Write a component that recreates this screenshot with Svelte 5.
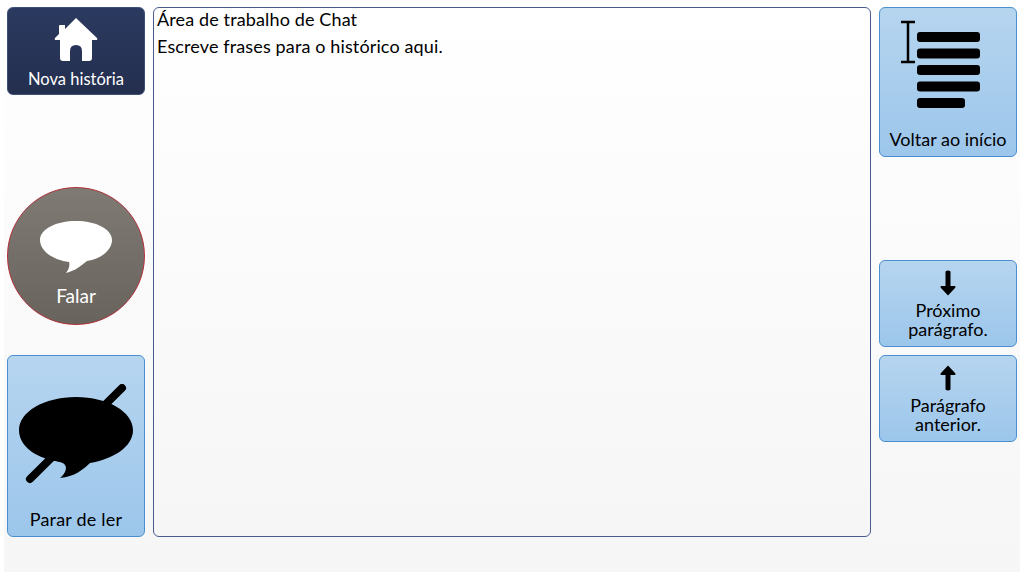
<script>
  const bars = [0, 1, 2, 3, 4];
</script>

<div class="page">
  <div class="col left">
    <button class="btn dark home">
      <svg class="ico" width="44" height="44" viewBox="0 0 44 44">
        <path fill="#fff" d="M22 0 L43 20 Q44 22 42 22 H38 V40 Q38 43 35 43 H28 V33 Q28 27 22 27 Q16 27 16 33 V43 H9 Q6 43 6 40 V22 H2 Q0 22 1 20 L5 16 V8 Q5 7 6 7 H11 V11 Z" />
      </svg>
      <span>Nova história</span>
    </button>
    <button class="btn round">
      <svg class="ico" width="74" height="54" viewBox="0 0 74 54">
        <path fill="#fff" d="M37 0 C57 0 73 8 73 19 C73 29 62 38 48 40 C43 44 36 50 27 52 C30 48 31 44 30 41 C14 39 1 30 1 19 C1 8 17 0 37 0 Z" />
      </svg>
      <span>Falar</span>
    </button>
    <button class="btn blue stop">
      <svg class="ico" width="116" height="100" viewBox="0 0 116 100">
        <line x1="12" y1="95" x2="104" y2="4" stroke="#000" stroke-width="8" stroke-linecap="round" />
        <path fill="#000" d="M58 13 C90 13 115 28 115 46 C115 63 95 75 72 79 C66 85 56 93 42 94 C48 89 49 84 47 81 C45 78 41 78 37 77 C17 73 1 62 1 46 C1 28 26 13 58 13 Z" />
      </svg>
      <span>Parar de ler</span>
    </button>
  </div>

  <div class="work">
    <p>Área de trabalho de Chat</p>
    <p>Escreve frases para o histórico aqui.</p>
  </div>

  <div class="col right">
    <button class="btn blue start">
      <svg class="ico" width="96" height="104" viewBox="0 0 96 104">
        <path d="M1 2 H15 M8 2 V42 M1 42 H15" fill="none" stroke="#000" stroke-width="2.5" />
        <g>
          {#each bars as b}
            <rect x="17" y={12 + b * 16.5} width={b === 4 ? 48 : 63} height="10" rx="3" fill="#000" />
          {/each}
        </g>
      </svg>
      <span>Voltar ao início</span>
    </button>
    <div class="pair">
      <button class="btn blue para">
        <svg class="ico" width="16" height="26" viewBox="0 0 16 26">
          <path d="M5.5 1.5 Q8 -0.5 10.5 1.5 V16 H15 Q16 17 15 18 L8 25.5 L1 18 Q0 17 1 16 H5.5 Z" fill="#000" />
        </svg>
        <span>Próximo parágrafo.</span>
      </button>
      <button class="btn blue para">
        <svg class="ico" width="16" height="26" viewBox="0 0 16 26">
          <path d="M5.5 24.5 Q8 26.5 10.5 24.5 V10 H15 Q16 9 15 8 L8 0.5 L1 8 Q0 9 1 10 H5.5 Z" fill="#000" />
        </svg>
        <span>Parágrafo anterior.</span>
      </button>
    </div>
  </div>
</div>

<style>
  :global(body) { background: #fff; }
  .page {
    box-sizing: border-box;
    width: 1016px;
    height: 572px;
    margin-left: 4px;
    padding: 7px 3px 35px;
    display: grid;
    grid-template-columns: 138px 718px 138px;
    column-gap: 8px;
    background: linear-gradient(#fff, #f6f6f6);
    font-family: "Lato", "Open Sans", sans-serif;
  }
  .col { display: flex; flex-direction: column; }
  .btn {
    box-sizing: border-box;
    width: 138px;
    margin: 0;
    padding: 0;
    display: flex;
    flex-direction: column;
    align-items: center;
    font: inherit;
    font-size: 18px;
    line-height: 19px;
    border-radius: 6px;
    border: 1px solid #4a90d0;
  }
  .blue { background: linear-gradient(#b6d5ef, #9cc6eb); color: #000; }
  .dark { background: linear-gradient(#2b3a60, #242f4f); color: #fff; border-color: #3f5078; }
  .home { height: 88px; padding-top: 10px; gap: 8px; font-size: 16.5px; }
  .round {
    height: 138px;
    margin-top: 92px;
    border-radius: 50%;
    padding-top: 33px;
    gap: 11px;
    font-size: 19px;
    color: #fff;
    background: linear-gradient(#7f7a73, #68645d);
    border-color: #b03038;
  }
  .stop { height: 182px; margin-top: 30px; padding-top: 28px; letter-spacing: 0.2px; }
  .stop span { margin-top: 26px; }
  .start { height: 150px; padding-top: 12px; gap: 6px; }
  .pair { margin-top: 103px; display: flex; flex-direction: column; gap: 8px; }
  .para { height: 87px; padding-top: 9px; gap: 5px; }
  .para span { width: 110px; text-align: center; }
  .work {
    box-sizing: border-box;
    border: 1px solid #4a5a8c;
    border-radius: 6px;
    background: linear-gradient(#fff, #f6f6f6);
    padding: 0 3px;
    font-size: 18px;
    letter-spacing: 0.13px;
    color: #000;
  }
  .work p { margin: 0 0 4px; line-height: 23px; }
</style>
